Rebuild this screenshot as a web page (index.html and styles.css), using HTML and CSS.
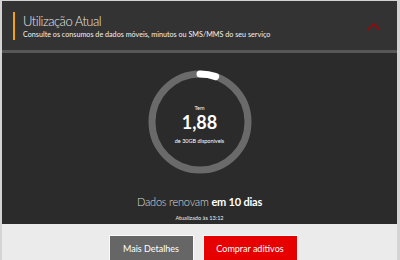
FILE: index.html
```html
<!DOCTYPE html>
<html lang="pt">
<head>
    <meta charset="UTF-8">
    <title>Utilização Atual</title>
    <link rel="stylesheet" href="styles.css">
</head>
<body>
    <div class="card">
        <div class="card-header">
            <div class="header-text">
                <h1>Utilização Atual</h1>
                <p>Consulte os consumos de dados móveis, minutos ou SMS/MMS do seu serviço</p>
            </div>
            <svg class="chevron" width="14" height="9" viewBox="0 0 14 9">
                <polyline points="1,8 7,2 13,8" fill="none" stroke="#b00000" stroke-width="1.4"/>
            </svg>
        </div>
        <div class="usage">
            <div class="gauge">
                <svg width="104" height="104" viewBox="0 0 104 104">
                    <circle cx="52" cy="52" r="48" fill="none" stroke="#6a6a6a" stroke-width="7"/>
                    <circle cx="52" cy="52" r="48" fill="none" stroke="#fff" stroke-width="7"
                            stroke-linecap="round" stroke-dasharray="16 400"
                            transform="rotate(-90 52 52)"/>
                </svg>
                <div class="gauge-label">
                    <span class="small">Tem</span>
                    <span class="amount">1,88</span>
                    <span class="small">de 30GB disponíveis</span>
                </div>
            </div>
            <p class="renew">Dados renovam <b>em 10 dias</b></p>
            <p class="updated">Atualizado às 13:12</p>
        </div>
        <div class="actions">
            <button class="btn btn-grey">Mais Detalhes</button>
            <button class="btn btn-red">Comprar aditivos</button>
        </div>
    </div>
</body>
</html>
```
FILE: styles.css
```css
body {
    margin: 0;
    font-family: Lato, "Open Sans", Arial, sans-serif;
    background-color: #ebebeb;
}
.card {
    border-style: solid;
    border-color: #d4d4d4;
    border-width: 1px 3px 0 2px;
    height: 259px;
    background-color: #ebebeb;
}
.card-header {
    display: flex;
    align-items: center;
    background-color: #333;
    height: 49px;
    padding: 0 16px 0 11px;
    border-bottom: 3px solid #575757;
}
.header-text {
    flex: 1;
    border-left: 2px solid #f0a30a;
    padding-left: 8px;
}
.header-text h1 {
    margin: 0;
    font-size: 13px;
    font-weight: 300;
    letter-spacing: -0.5px;
    color: #e8e8e8;
    line-height: 18px;
}
.header-text p {
    margin: 0;
    font-size: 7.2px;
    color: #f2f2f2;
    line-height: 10px;
}
.chevron {
    margin-top: 1px;
}
.usage {
    display: flex;
    flex-direction: column;
    align-items: center;
    background-color: #2b2b2b;
    height: 171px;
    padding-top: 17px;
    box-sizing: border-box;
    color: #fff;
}
.gauge {
    display: grid;
}
.gauge > * {
    grid-area: 1 / 1;
}
.gauge-label {
    display: flex;
    flex-direction: column;
    align-items: center;
    padding-top: 34px;
}
.small {
    font-size: 5.5px;
    line-height: 8px;
}
.amount {
    font-size: 18px;
    font-weight: 700;
    line-height: 22px;
    margin: -1px 0 4px;
}
.renew {
    margin: 20px 0 0;
    font-size: 11px;
    font-weight: 300;
    letter-spacing: -0.2px;
    color: #ddd;
    line-height: 16px;
}
.renew b {
    font-weight: 700;
    color: #fff;
}
.updated {
    margin: 4px 0 0;
    font-size: 5.6px;
    line-height: 8px;
    color: #eee;
}
.actions {
    display: flex;
    justify-content: center;
    gap: 9px;
    padding: 11px 0 0 7px;
}
.btn {
    font-family: inherit;
    font-size: 9px;
    color: #fff;
    border: 1px solid #fafafa;
    height: 26px;
    cursor: pointer;
}
.btn-grey {
    background-color: #666;
    width: 85px;
}
.btn-red {
    background-color: #e60000;
    width: 95px;
}
```
